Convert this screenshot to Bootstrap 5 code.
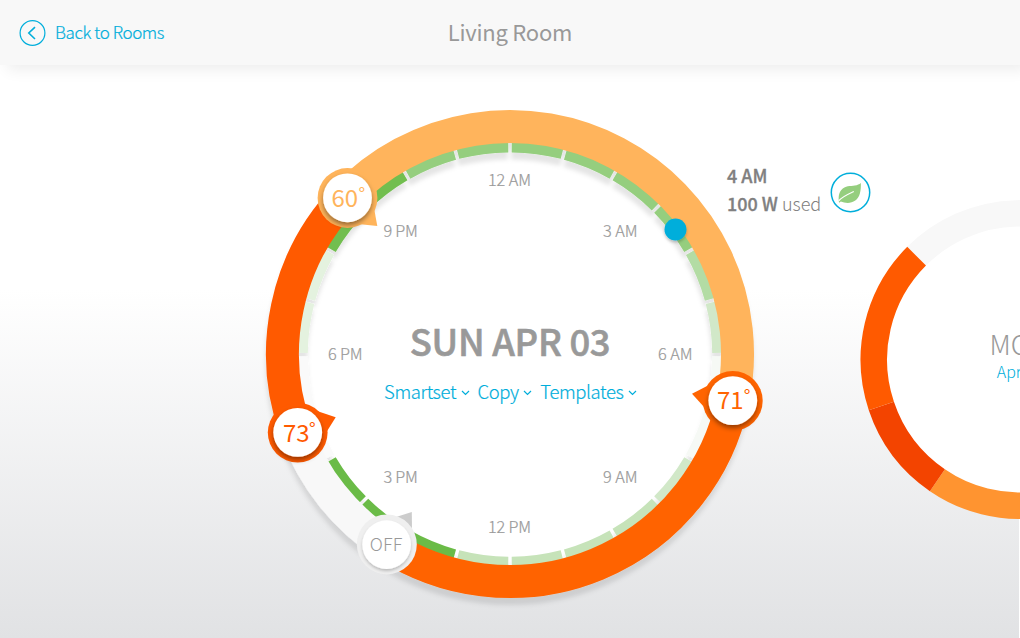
<!DOCTYPE html>
<html lang="en">
<head>
<meta charset="utf-8">
<meta name="viewport" content="width=device-width, initial-scale=1">
<title>Living Room</title>
<link href="https://cdn.jsdelivr.net/npm/bootstrap@5.3.0/dist/css/bootstrap.min.css" rel="stylesheet">
<style>
  :root { --aqua: #00aedb; --ink: #999; }
  body {
    font-family: "Noto Sans CJK SC", "Noto Sans", sans-serif;
    font-weight: 300;
    color: var(--ink);
    height: 638px;
    background: #fff linear-gradient(#fff 0, #fff 290px, #e1e2e4 638px) 0 0 / calc(100% - 1px) 638px no-repeat;
  }
  a { color: var(--aqua); text-decoration: none; }
  .topbar { height: 65px; background: #f8f8f8; box-shadow: 7px 5px 14px rgba(0,0,0,.07); z-index: 2; }
  .topbar > * { flex: 1 1 0; }
  .back-link { font-size: 17px; line-height: 26px; letter-spacing: -.4px; -webkit-text-stroke: .2px var(--aqua); }
  .back-link span { margin: -2px 0 0 5px; }
  .room-title { font-size: 22px; line-height: 30px; font-weight: 400; letter-spacing: -.25px; padding-bottom: 3px; }
  .stage { height: 573px; padding-left: 266px; gap: 106px; }
  .dial { width: 488px; height: 488px; margin-top: 45px; }
  .next-dial { width: 319px; height: 320px; margin-top: 135px; }
  .dial svg.ring, .next-dial svg.ring { overflow: visible; }
  .hours text { font-size: 16.3px; fill: var(--ink); stroke: var(--ink); stroke-width: .2px; text-anchor: middle; }
  .temps text { font-size: 24px; font-weight: 400; text-anchor: middle; }
  .temps .deg { font-size: 18px; }
  .temps .off { font-size: 18px; font-weight: 300; }
  .center-box { top: 206px; }
  .day-name { font-size: 36.4px; line-height: 48px; font-weight: 500; letter-spacing: -.28px; -webkit-text-stroke: .6px var(--ink); }
  .tools { font-size: 18.5px; line-height: 28px; margin-top: 13px; gap: 8px; letter-spacing: -.4px; padding-left: 1px; -webkit-text-stroke: .2px var(--aqua); }
  .tools a { display: flex; align-items: center; gap: 4.5px; }
  .tools svg { margin-top: 4px; }
  .readout { left: 461px; top: 51px; color: #808080; font-size: 18px; line-height: 28px; gap: 9px; }
  .readout b { font-weight: 500; -webkit-text-stroke: .3px #808080; }
  .readout svg { margin-top: 7px; }
  .next-label { top: 127px; font-size: 16px; line-height: 24px; }
  .next-label .name { font-size: 27px; line-height: 34px; margin-bottom: -2px; }
</style>
</head>
<body>
<header class="topbar d-flex align-items-center position-relative">
  <a href="#" class="back-link d-flex align-items-center">
    <svg class="ms-3" width="34" height="28" viewBox="16 19 34 28" fill="none" stroke="#00aedb">
      <circle cx="32.5" cy="33" r="12.4" stroke-width="1.2"/>
      <path d="M35 27.2 28.8 33l6.200 6" stroke-width="1.6"/>
    </svg>
    <span>Back to Rooms</span>
  </a>
  <h1 class="room-title m-0 text-center">Living Room</h1>
  <span></span>
</header>

<main class="stage d-flex align-items-start overflow-hidden">
  <section class="dial position-relative flex-shrink-0">
    <svg class="ring d-block" width="488" height="488" viewBox="266 110 488 488">
      <defs>
        <filter id="ringShadow" x="-10%" y="-10%" width="120%" height="120%">
          <feDropShadow dx="-.5" dy="7" stdDeviation="1.9" flood-color="#000" flood-opacity=".1"/>
        </filter>
        <filter id="knobShadow" x="-30%" y="-30%" width="160%" height="170%">
          <feDropShadow dx="0" dy="3" stdDeviation="2.4" flood-color="#000" flood-opacity=".42"/>
        </filter>
        <filter id="softShadow" x="-30%" y="-30%" width="160%" height="170%">
          <feDropShadow dx="0" dy="2" stdDeviation="1.6" flood-color="#000" flood-opacity=".22"/>
        </filter>
      </defs>
      <circle cx="510" cy="354" r="212" fill="#fff"/>
      <g filter="url(#ringShadow)" fill="none">
        <g id="usage" stroke-width="11"></g>
        <g id="heat" stroke-width="33"></g>
      </g>
      <g class="hours">
        <text x="509.5" y="186" textLength="43">12 AM</text>
        <text x="620.3" y="237" textLength="34.5">3 AM</text>
        <text x="675.3" y="360" textLength="34.5">6 AM</text>
        <text x="620.3" y="483" textLength="34.5">9 AM</text>
        <text x="509.5" y="533" textLength="43">12 PM</text>
        <text x="400.7" y="483" textLength="34.5">3 PM</text>
        <text x="345.3" y="360" textLength="34.5">6 PM</text>
        <text x="400.7" y="237" textLength="34.5">9 PM</text>
      </g>
      <g class="temps">
        <g fill="#ffb45b"><path d="M374 208 377.300 226 358 224Z"/><circle cx="347.5" cy="198" r="29.9"/></g>
        <g fill="#ff5a00"><path d="M317 411 335.700 417.300 326.500 432Z"/><circle cx="297.7" cy="432.6" r="29.9"/></g>
        <g fill="#ff6400"><path d="M709 385 692 393.700 704 407Z"/><circle cx="732.8" cy="400.8" r="29.9"/></g>
        <path fill="#ccc" d="M396 517 411.800 512 412 530Z"/>
        <circle cx="386.8" cy="544.4" r="30" fill="#efefef"/>
        <g fill="#fff" filter="url(#knobShadow)">
          <circle cx="347.5" cy="197.8" r="24.4"/>
          <circle cx="297.7" cy="432.4" r="24.4"/>
          <circle cx="732.8" cy="400.6" r="24.4"/>
        </g>
        <circle cx="386.6" cy="544.6" r="24.3" fill="#fff" filter="url(#softShadow)"/>
        <text x="344.8" y="207" fill="#ffb45b" textLength="26.5">60</text><text class="deg" x="361.8" y="201" fill="#ffb45b">°</text>
        <text x="296.3" y="442" fill="#ff5a00" textLength="26.5">73</text><text class="deg" x="312.3" y="436" fill="#ff5a00">°</text>
        <text x="730.3" y="409.300" fill="#ff6400" textLength="26.5">71</text><text class="deg" x="747" y="403.300" fill="#ff6400">°</text>
        <text class="off" x="386" y="550.5" fill="#999" textLength="32.5">OFF</text>
      </g>
      <circle cx="675.5" cy="229.5" r="11" fill="#00aedb" filter="url(#softShadow)"/>
    </svg>

    <div class="center-box position-absolute start-0 w-100 text-center">
      <h2 class="day-name m-0">SUN APR 03</h2>
      <nav class="tools d-flex justify-content-center">
        <a href="#">Smartset <svg width="9" height="6" viewBox="0 0 9 6" fill="none" stroke="#00aedb" stroke-width="1.200"><path d="M1 1l3.500 3.500L8 1"/></svg></a>
        <a href="#">Copy <svg width="9" height="6" viewBox="0 0 9 6" fill="none" stroke="#00aedb" stroke-width="1.200"><path d="M1 1l3.500 3.500L8 1"/></svg></a>
        <a href="#">Templates <svg width="9" height="6" viewBox="0 0 9 6" fill="none" stroke="#00aedb" stroke-width="1.200"><path d="M1 1l3.500 3.500L8 1"/></svg></a>
      </nav>
    </div>

    <div class="readout position-absolute d-flex align-items-center text-nowrap">
      <div><b>4 AM</b><br><b>100 W</b> used</div>
      <svg width="41" height="41" viewBox="830.2 172.2 41 41">
        <circle cx="850.7" cy="192.7" r="19.2" fill="#fff" stroke="#00aedb" stroke-width="1.5"/>
        <path fill="#95ce7e" d="M861 183.200C861.400 191 860 197.500 855.500 200.800C851 204 845.500 203.400 841 201.800L839.300 202.900C838.500 198 838.700 193.500 841.500 190.200C845.500 185.600 850.500 186.700 855 185.800C857.500 185.300 859.500 184.500 861 183.200Z"/>
        <path fill="none" stroke="#fff" stroke-width="1.100" d="M839 201C842.500 196.500 848 194.500 854 191.700"/>
      </svg>
    </div>
  </section>

  <section class="next-dial position-relative flex-shrink-0">
    <svg class="ring d-block" width="319" height="320" viewBox="860 200 319 320">
      <circle cx="1020" cy="359.6" r="134" fill="#fff"/>
      <g id="nextHeat" fill="none" stroke-width="26.5"></g>
    </svg>
    <div class="next-label position-absolute start-0 w-100 text-center">
      <div class="name">MON</div>
      <a href="#">Apr 04</a>
    </div>
  </section>
</main>

<script src="https://cdn.jsdelivr.net/npm/bootstrap@5.3.0/dist/js/bootstrap.bundle.min.js"></script>
<script>
  // Angles are degrees clockwise from midnight at the top; one hour is 15 degrees.
  function arc(group, cx, cy, r, from, to, color) {
    const pt = a => {
      const t = a * Math.PI / 180;
      return (cx + r * Math.sin(t)).toFixed(2) + ' ' + (cy - r * Math.cos(t)).toFixed(2);
    };
    const p = document.createElementNS('http://www.w3.org/2000/svg', 'path');
    p.setAttribute('d', `M${pt(from)}A${r} ${r} 0 ${to - from > 180 ? 1 : 0} 1 ${pt(to)}`);
    p.setAttribute('stroke', color);
    document.getElementById(group).appendChild(p);
  }
  const usage = [
    [-60, -30, '#72be50'], [-30, 60, '#95ce7e'], [60, 75, '#b3dca4'], [75, 90, '#d1e8c8'],
    [120, 135, '#d1e8c8'], [135, 195, '#c6e3b9'], [195, 240, '#6bbb47'], [270, 300, '#e4f2df']
  ];
  arc('usage', 510, 354.6, 207.7, 90.5, 119.5, '#f6f9f5');
  arc('usage', 510, 354.6, 207.7, 240.5, 269.5, '#fafafa');
  for (const [from, to, color] of usage)
    for (let a = from; a < to; a += 15) arc('usage', 510, 354.6, 207.7, a + .48, a + 14.52, color);

  arc('heat', 510, 354, 227.5, -46.3, 102, '#ffb45b');
  arc('heat', 510, 354, 227.5, 102, 213, '#ff6400');
  arc('heat', 510, 354, 227.5, 213, 250, '#f8f8f8');
  arc('heat', 510, 354, 227.5, 250, 313.7, '#ff5a00');

  arc('nextHeat', 1020, 359.6, 146.2, -45, 130, '#f8f8f8');
  arc('nextHeat', 1020, 359.6, 146.2, 130, 214.4, '#ff9430');
  arc('nextHeat', 1020, 359.6, 146.2, 214.4, 251.5, '#f34400');
  arc('nextHeat', 1020, 359.6, 146.2, 251.5, 315, '#ff5a00');
</script>
</body>
</html>
